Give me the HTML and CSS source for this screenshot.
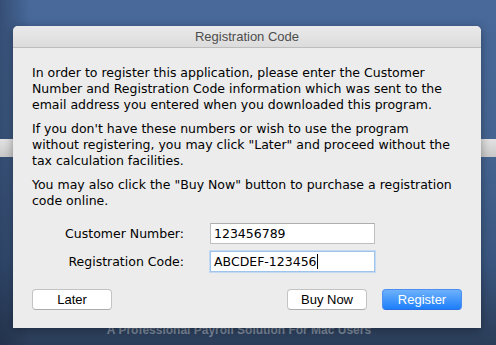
FILE: index.html
```html
<!DOCTYPE html>
<html lang="en">
  <head>
    <meta charset="UTF-8" />
    <title>Registration Code</title>
    <link rel="stylesheet" href="styles.css">
  </head>
  <body>
    <!-- the app window behind the sheet -->
    <div class="backdrop">
      <div class="toolbar-strip"></div>
      <p class="tagline">A Professional Payroll Solution For Mac Users</p>
    </div>

    <div class="dialog">
      <div class="title-bar">Registration Code</div>
      <div class="dialog-body">
        <p>In order to register this application, please enter the Customer Number and Registration Code information which was sent to the email address you entered when you downloaded this program.</p>
        <p>If you don't have these numbers or wish to use the program without registering, you may click "Later" and proceed without the tax calculation facilities.</p>
        <p>You may also click the "Buy Now" button to purchase a registration code online.</p>

        <div class="form">
          <div class="form-row">
            <label class="form-label">Customer Number:</label>
            <div class="field">123456789</div>
          </div>
          <div class="form-row">
            <label class="form-label">Registration Code:</label>
            <div class="field focused">ABCDEF-123456<span class="caret"></span></div>
          </div>
        </div>

        <div class="btn-row">
          <button class="btn">Later</button>
          <div class="btn-group">
            <button class="btn">Buy Now</button>
            <button class="btn primary">Register</button>
          </div>
        </div>
      </div>
    </div>
  </body>
</html>
```

FILE: styles.css
```css
* {
  margin: 0;
  padding: 0;
  box-sizing: border-box;
}

:root {
  --sheet-bg: #ececec;
  --text: #000000;
  --title-text: #4d4d4d;
  --field-border: #bfbfbf;
  --focus-border: #9fc3ea;
}

body {
  width: 496px;
  height: 345px;
  overflow: hidden;
  position: relative;
  background: linear-gradient(180deg, #48699a 0%, #44638f 45%, #3a5680 75%, #2b3d58 100%);
  font-family: "DejaVu Sans", "Lucida Grande", sans-serif;
}

/* background window (under the sheet) */
.backdrop {
  position: absolute;
  inset: 0;
  background: linear-gradient(90deg, rgba(20, 30, 50, 0.35) 0%, rgba(20, 30, 50, 0) 6%);
}

.toolbar-strip {
  position: absolute;
  left: 0;
  right: 0;
  top: 139px;
  height: 18px;
  background: linear-gradient(180deg, #e2e2e2, #c8c8c8);
}

.tagline {
  position: absolute;
  top: 323px;
  left: 0;
  width: 478px;
  text-align: center;
  font-family: "Liberation Sans", Arial, sans-serif;
  font-weight: bold;
  font-size: 12px;
  color: #7a8698;
}

/* the sheet */
.dialog {
  position: relative;
  margin: 26px 0 0 13px;
  width: 468px;
  height: 302px;
  background: var(--sheet-bg);
  border-radius: 5px 5px 0 0;
  box-shadow: 0 2px 10px rgba(0, 0, 0, 0.35);
}

.title-bar {
  height: 22px;
  line-height: 21px;
  text-align: center;
  font-family: "Liberation Sans", Arial, sans-serif;
  font-size: 13px;
  color: var(--title-text);
  background: linear-gradient(180deg, #eaeaea, #dcdcdc);
  border-bottom: 1px solid #bdbdbd;
  border-radius: 5px 5px 0 0;
}

.dialog-body {
  padding: 17px 19px 0 19px;
  font-size: 12.5px;
  line-height: 16px;
  color: var(--text);
}

.dialog-body p {
  padding-right: 5px;
}

.dialog-body p + p {
  margin-top: 8px;
}

.form {
  display: flex;
  flex-direction: column;
  gap: 7px;
  margin-top: 14px;
}

.form-row {
  display: flex;
  align-items: center;
}

.form-label {
  width: 152px;
  text-align: right;
  margin-right: 26px;
}

.field {
  width: 165px;
  height: 21px;
  padding: 0 3px;
  line-height: 19px;
  background: #fff;
  border: 1px solid var(--field-border);
  border-top-color: #aeaeae;
  font-size: 12.5px;
}

.field.focused {
  border-color: var(--focus-border);
  box-shadow: 0 0 0 1px #c4daf2;
}

.caret {
  display: inline-block;
  width: 1px;
  height: 15px;
  background: #000;
  vertical-align: -3px;
}

.btn-row {
  display: flex;
  justify-content: space-between;
  margin-top: 17px;
}

.btn-group {
  display: flex;
  gap: 15px;
}

.btn {
  width: 80px;
  height: 21px;
  font-family: "Liberation Sans", Arial, sans-serif;
  font-size: 13px;
  color: #000;
  background: #fff;
  border: 1px solid #c3c3c3;
  border-bottom-color: #acacac;
  border-radius: 4px;
}

.btn.primary {
  color: #fff;
  background: linear-gradient(180deg, #6db1fb, #1d7ffa);
  border-color: #4c8ff1;
  border-bottom-color: #2c6fe0;
}
```
